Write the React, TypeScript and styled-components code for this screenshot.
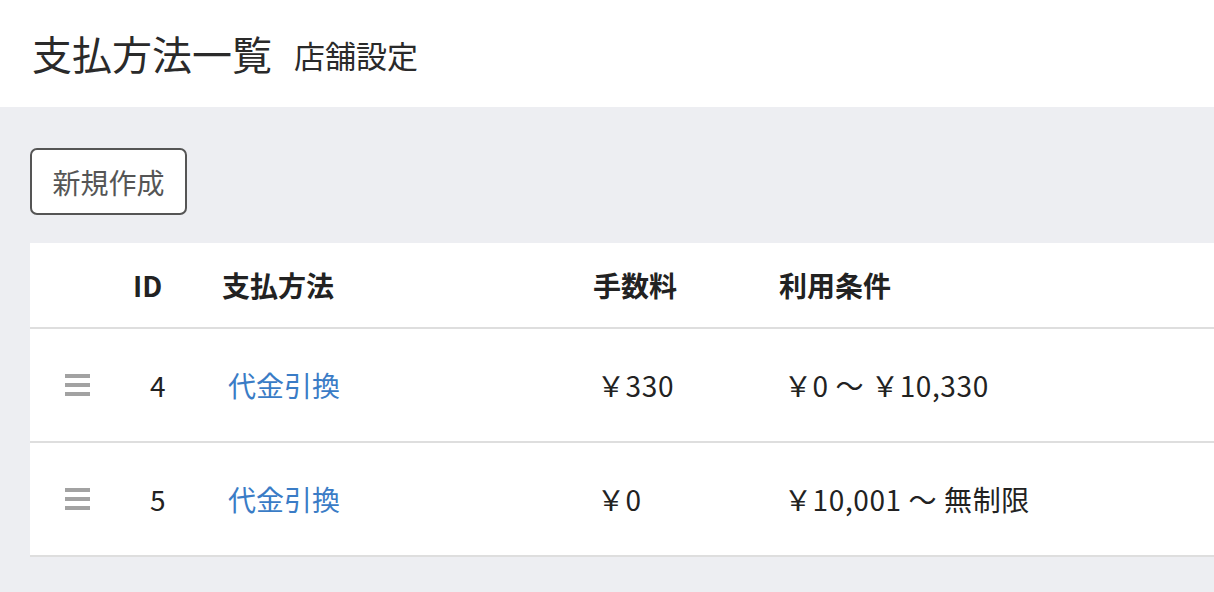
import React from 'react';
import styled, { createGlobalStyle } from 'styled-components';

const GlobalStyle = createGlobalStyle`
  html, body {
    margin: 0;
    padding: 0;
    background: #edeef2;
    font-family: "Noto Sans CJK JP", "Noto Sans", sans-serif;
    color: #222;
  }
`;

const Header = styled.header`
  background: #fff;
  height: 107px;
  display: flex;
  align-items: center;
  gap: 22px;
  padding: 0 32px;
  box-sizing: border-box;
`;

const Title = styled.h1`
  margin: 0;
  font-size: 40px;
  font-weight: 400;
  color: #2a2a2a;
  line-height: 1;
  margin-top: -2px;
`;

const SubTitle = styled.span`
  font-size: 31px;
  color: #2a2a2a;
  line-height: 1;
  margin-top: 2px;
`;

const Content = styled.main`
  padding: 41px 0 0 30px;
`;

const NewButton = styled.button`
  font-family: inherit;
  font-size: 28px;
  color: #555;
  background: #fff;
  border: 2px solid #555;
  border-radius: 7px;
  width: 157px;
  height: 67px;
  padding: 0;
  cursor: pointer;
`;

const Table = styled.div`
  margin-top: 28px;
  background: #fff;
`;

const Row = styled.div<{ $head?: boolean }>`
  display: grid;
  grid-template-columns: 103px 89px 371px 186px 1fr;
  align-items: center;
  height: ${({ $head }) => ($head ? '84px' : '112px')};
  border-bottom: 2px solid #dedede;
  font-size: 28px;
  font-weight: ${({ $head }) => ($head ? 700 : 400)};
  letter-spacing: ${({ $head }) => ($head ? 0 : '0.6px')};
`;

const Cell = styled.div<{ $shift?: number }>`
  padding-left: ${({ $shift }) => $shift ?? 0}px;
  white-space: nowrap;
`;

const Handle = styled.div`
  padding-left: 35px;
  display: flex;
  flex-direction: column;
  gap: 5px;
  cursor: grab;

  span {
    display: block;
    width: 25px;
    height: 4px;
    background: #a2a2a2;
  }
`;

const MethodLink = styled.a`
  color: #3a7cc6;
  text-decoration: none;
  letter-spacing: 0;
`;

const rows = [
  { id: 4, name: '代金引換', fee: '￥330', cond: '￥0 〜 ￥10,330' },
  { id: 5, name: '代金引換', fee: '￥0', cond: '￥10,001 〜 無制限' },
];

export default function App() {
  return (
    <>
      <GlobalStyle />
      <Header>
        <Title>支払方法一覧</Title>
        <SubTitle>店舗設定</SubTitle>
      </Header>
      <Content>
        <NewButton>新規作成</NewButton>
        <Table>
          <Row $head>
            <Cell />
            <Cell>ID</Cell>
            <Cell>支払方法</Cell>
            <Cell>手数料</Cell>
            <Cell>利用条件</Cell>
          </Row>
          {rows.map(r => (
            <Row key={r.id}>
              <Handle>
                <span />
                <span />
                <span />
              </Handle>
              <Cell $shift={17}>{r.id}</Cell>
              <Cell $shift={6}>
                <MethodLink href="#">{r.name}</MethodLink>
              </Cell>
              <Cell $shift={4}>{r.fee}</Cell>
              <Cell $shift={5}>{r.cond}</Cell>
            </Row>
          ))}
        </Table>
      </Content>
    </>
  );
}
